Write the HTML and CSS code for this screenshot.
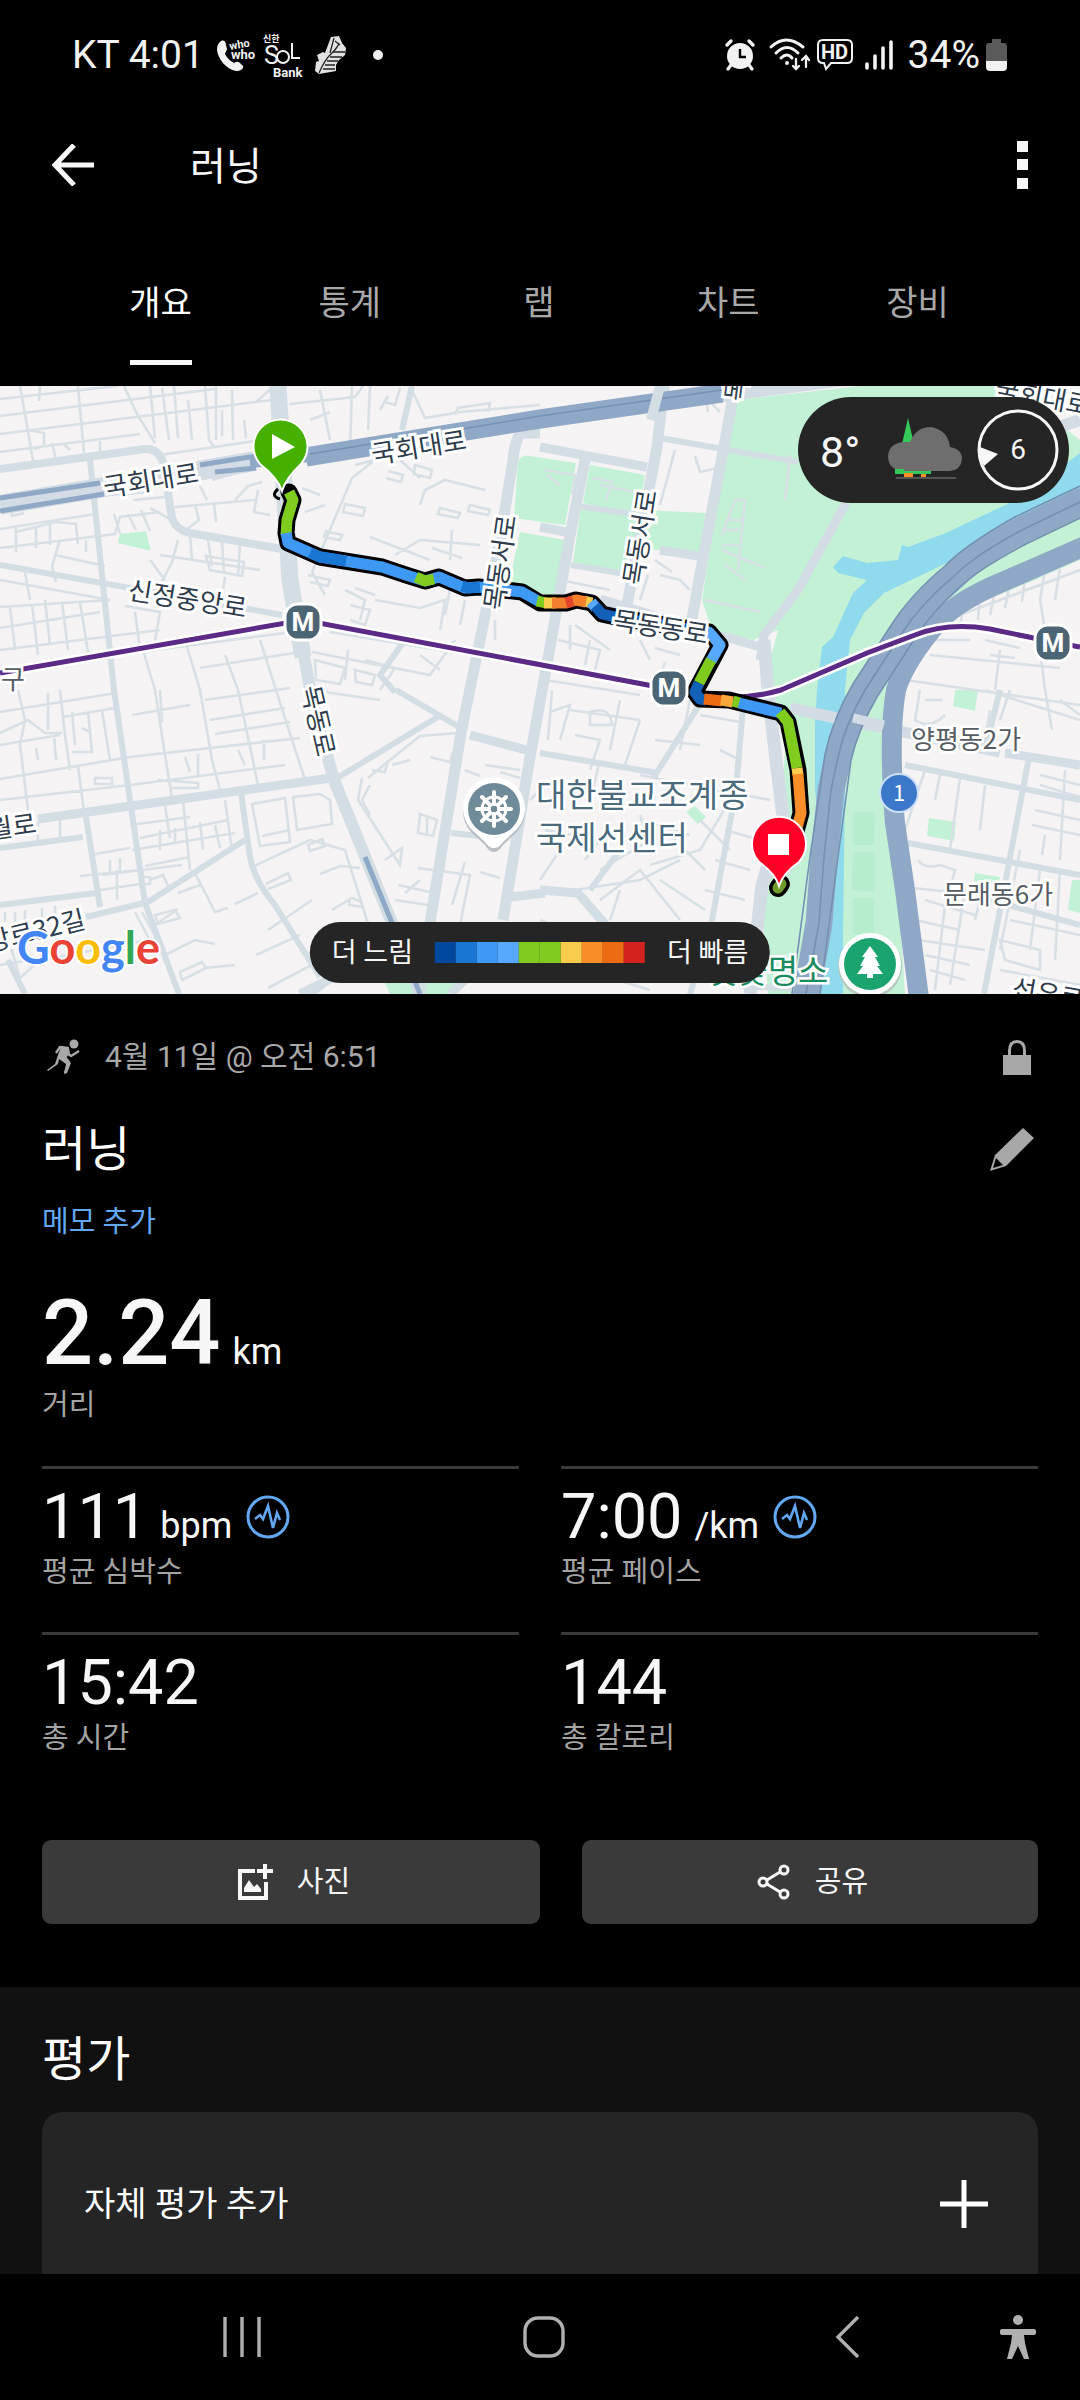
FILE: index.html
```html
<!DOCTYPE html>
<html lang="ko">
<head>
<meta charset="utf-8">
<meta name="viewport" content="width=device-width, initial-scale=1">
<title>러닝</title>
<link rel="stylesheet" href="styles.css">
</head>
<body>
<div class="status">
  <div class="status-side">
    <span class="status-text">KT 4:01</span>
    <svg class="ic-who" width="40" height="36" viewBox="0 0 40 36"><path d="M3 5C6 2 9 4 9 8L10 12C10 14 8 15 8 17C10 21 13 24 17 26C19 25 21 24 23 26L26 29C27 32 23 34 19 34C9 32 1 22 0 13C0 9 1 7 3 5Z" fill="#f2f2f2"/><text x="13" y="13" font-size="11" font-weight="700" transform="rotate(-10 13 13)">who</text><text x="14" y="22" font-size="13" font-weight="700">who</text></svg>
    <svg class="ic-sol" width="42" height="48" viewBox="0 0 42 48"><text x="0" y="11" font-size="9" font-weight="700">신한</text><text x="1" y="33" font-size="25">S</text><circle cx="20" cy="26" r="6" fill="none" stroke="#f2f2f2" stroke-width="2"/><path d="M29 12V27H37" fill="none" stroke="#f2f2f2" stroke-width="2"/><text x="10" y="46" font-size="13" font-weight="700">Bank</text></svg>
    <svg class="ic-shoe" width="32" height="40" viewBox="0 0 32 40"><path d="M16 2L24 1L27 8L31 13L30 20L24 25L21 30V36L4 39L0 36L1 27L4 26L2 20L8 17L10 18L13 10Z" fill="#e2e2e2"/><path d="M4 38Q10 24 17 18Q23 12 24 8M15 18L19 3M18 17L30 17M15 22L27 22M12 26L23 26M10 30L20 30M8 34L20 34M20 6L25 10" fill="none" stroke="#222" stroke-width="1.3"/></svg>
    <svg class="ic-dot" width="10" height="10" viewBox="0 0 10 10"><circle cx="5" cy="5" r="5" fill="#f2f2f2"/></svg>
  </div>
  <div class="status-side">
    <svg class="ic-alarm" width="30" height="32" viewBox="0 0 30 32"><circle cx="15" cy="17" r="13" fill="#f2f2f2"/><path d="M2 6L6 2M28 6L24 2M6 26L3 30M24 26L27 30" stroke="#f2f2f2" stroke-width="3.4" stroke-linecap="round"/><path d="M15 10V18H21" fill="none" stroke="#000" stroke-width="2.4"/></svg>
    <svg class="ic-wifi" width="42" height="34" viewBox="0 0 42 34" fill="none" stroke="#f2f2f2" stroke-linecap="round"><path d="M2 9Q17 -5 34 9M7 15Q18 4 29 15M12 20Q18 14 23 20" stroke-width="3"/><path d="M27 21V31M24 28L27 31L30 28M37 29V19M33 22L37 18L40 22" stroke-width="2.3"/><circle cx="18" cy="25" r="2" fill="#f2f2f2" stroke="none"/></svg>
    <svg class="ic-hd" width="36" height="34" viewBox="0 0 36 34"><path d="M6 2H30Q35 2 35 7V20Q35 25 30 25H14L9 31L7 25H6Q1 25 1 20V7Q1 2 6 2Z" fill="none" stroke="#f2f2f2" stroke-width="2"/><text x="4" y="21" font-size="20" font-weight="700">HD</text></svg>
    <svg class="ic-signal" width="28" height="32" viewBox="0 0 28 32"><path d="M2 25V29M10 17V29M18 9V29M26 3V29" stroke="#f2f2f2" stroke-width="3.6" stroke-linecap="round"/></svg>
    <span class="status-text">34%</span>
    <svg class="ic-batt" width="21" height="32" viewBox="0 0 21 32"><path d="M6 0H15V4H18Q21 4 21 8V22H0V8Q0 4 3 4H6Z" fill="#5a5a5a"/><path d="M0 22H21V28Q21 32 17 32H4Q0 32 0 28Z" fill="#f2f2f2"/></svg>
  </div>
</div>

<header class="appbar">
  <button class="icon-btn" aria-label="뒤로"><svg width="42" height="42" viewBox="0 0 42 42"><path d="M22 1L3 21L22 41M3 21H42" fill="none" stroke="#f7f7f7" stroke-width="5"/></svg></button>
  <h1 class="appbar-title">러닝</h1>
  <button class="icon-btn" aria-label="메뉴"><svg width="11" height="48" viewBox="0 0 11 48"><path d="M0 0H11V11H0ZM0 18H11V29H0ZM0 37H11V48H0Z" fill="#f7f7f7"/></svg></button>
</header>

<nav class="tabs">
  <a class="tab tab-on" href="#overview">개요</a>
  <a class="tab" href="#stats">통계</a>
  <a class="tab" href="#laps">랩</a>
  <a class="tab" href="#charts">차트</a>
  <a class="tab" href="#gear">장비</a>
</nav>

<div class="map" id="overview">
<svg class="map-svg" viewBox="0 386 1080 608" role="img" aria-label="경로 지도">
  <rect x="0" y="386" width="1080" height="608" fill="#f5f3f4"/>
  <!-- parks -->
  <g fill="#c3f1d5">
    <path d="M736 400L860 386H1010L1080 440V560L1035 580L950 615L915 660L890 700L884 740L896 850L905 994H768L762 900L778 850L785 750L774 690L771 657L778 630L753 640L712 630L702 600L726 447Z"/>
    <path d="M518 462Q522 454 530 456L576 463L565 525L514 518Z"/>
    <path d="M520 532L565 540L556 596L508 588Z"/>
    <path d="M590 465L645 475L638 515L583 503Z"/>
    <path d="M581 507L707 513L702 553L630 548L622 573L573 562Z"/>
    <path d="M120 534L146 531L151 551L118 543Z"/>
    <path d="M929 818L956 822L954 841L927 836ZM955 690H978L975 711L953 706ZM975 873L1000 877L998 883L974 881ZM1072 880H1080V913L1068 910ZM686 812L695 806L706 817L698 824ZM385 983H462L448 994H390Z"/>
  </g>
  <g fill="#b6edcd"><path d="M853 812H875L874 845H853ZM853 852H875V892L852 890ZM853 898H874V934H853Z"/></g>
  <!-- river -->
  <path d="M1080 453L1022 497L946 533L908 547L902 545L898 560L867 563L843 556L833 567L838 573L867 580L853 593L833 637L822 647L817 690L815 723V790L824 870L815 994H843V930L846 723L845 690L850 640L864 613L884 593L953 560L1080 495Z" fill="#90daee"/>
  <!-- alleys -->
  <g fill="none" stroke="#d8e0e6" stroke-width="2.6">
    <path d="M0 399L118 386M0 416L215 389M0 434L272 400M0 452L140 434M160 455L262 440M20 386L34 466M40 386L39 401M78 386L84 453M52 443L56 459M124 386L137 414L155 443M150 386L155 438M162 388L169 440M174 386L178 438M188 400L192 440M205 386L209 440L215 448M216 386V440M222 436V410M232 390L233 440M244 420L246 438M256 402L272 388M64 444L70 450M100 441V451M28 430L44 433V446L34 449"/>
    <path d="M0 529L95 514M0 548L66 540L115 534L120 517L160 512M16 528L16 552M16 532L56 522L76 524L78 544M36 526L36 548M50 522V545M0 503L150 492M10 504L12 516L24 513M114 514L120 534M128 514L136 530M141 510L150 531M133 500L165 497M150 508L172 520M60 540L52 566L56 582M86 552V540M100 550L102 590M0 580L110 600M55 555L105 566M25 572L30 600"/>
    <path d="M175 507L255 500M195 505L199 520L186 530M214 503L216 522M235 500L248 486L262 482M178 540L172 562L160 585L150 600M160 555L260 570M150 560L165 580M190 534L192 560M208 540L212 566M222 542L224 572M240 545L238 575M206 556L244 562L242 576L210 570ZM174 585L190 610M188 590L240 602M225 577L220 610M200 486L207 500M258 490L254 512L270 515M212 480L248 470"/>
    <path d="M0 607L110 600M0 628L100 612M0 650L160 630M10 607L15 650M32 604L38 655M45 600L50 645M62 602L68 650M80 602L88 652M0 670L140 652L285 633M125 606L160 612L155 640M135 612L140 650M185 640L200 690L212 760L220 790M143 650L155 690L165 755L172 798M225 655L238 690L258 785M260 640L276 690L305 780M200 668L300 652M205 700L290 688M210 720L285 708M215 734L290 722"/>
    <path d="M0 712L116 693M0 745L60 735M62 717L115 708M0 779L130 757L300 738M0 800L130 785L285 765M60 690L65 735L70 770M18 690L25 720L20 745L28 810M0 733L28 720L45 733H62M48 693V730M72 712L75 745M88 712L92 752M102 710L110 760M82 728L90 732L92 752H72M36 748L38 760M54 735L56 760M78 766L84 812M95 778H112V784H95ZM158 780L198 783V788H170M185 757L190 772M198 754V775M238 750L245 765M264 740V760M160 690L162 722M132 715L190 705"/>
    <path d="M38 822V840M60 820V838M130 825L190 817M140 838L228 820M132 850L235 833M145 866L190 857M165 805L170 838M183 800L190 870M200 822L203 850M215 825L220 848M160 830V850M175 828V844M225 800L232 850M95 854L130 848M102 875L182 865M110 860V875M120 858V872M142 877H150V884H142ZM80 876L140 870M100 890L140 884M117 870V900M150 880L163 875L170 890M5 912V922M15 912V922M25 910V920M42 908V918M55 906V914"/>
    <path d="M0 965L30 960M10 945L20 978L40 960L160 938M155 925L178 909M155 915L175 910L180 918L158 924ZM165 955L195 940L215 944M180 972L202 962L206 968L182 980ZM205 968L235 965M178 893L200 885M196 875L215 912L228 908M135 912L155 950M142 912L160 945"/>
    <path d="M252 804L285 798L290 842L260 846ZM293 797L320 794L330 800L332 824L297 830ZM262 836L290 830M250 868L310 840L345 850L385 978M308 845L322 839L325 846L310 851ZM266 884L288 873L291 880L268 889M320 874L340 866L360 868M235 904L258 893M268 930L312 900M256 955L300 935M268 988L340 950M332 910L352 898L362 902M350 898L349 905L364 907"/>
    <path d="M368 778L385 764L420 736L458 733M362 778L358 800L400 865L402 848L385 860M388 760L385 772L372 770M392 765L410 760M430 757L450 762L453 752M370 785L362 800L370 815M420 814L437 820L433 836L418 833ZM427 815V835M398 885L430 892M405 893L420 880M395 900L428 905M418 868L470 875L460 925M452 905L465 862M480 872L500 878M465 770L480 776M500 772L520 778M485 765L520 770M530 800L540 790"/>
    <path d="M290 404L355 397L363 386M320 390L330 440M352 386L350 450M310 420L330 412M370 386L368 430M388 396L380 410M400 388L395 405L385 402M410 386L425 418L460 412L540 405M455 415L458 408L490 403L488 412M355 465L375 460L352 478L312 572M400 460L420 478M415 465L432 470L430 478L414 474ZM388 471L403 475L401 482L386 478M425 490L445 480L485 490M425 490L420 505M345 504L365 508L363 516L343 512ZM326 531L342 535L340 540L324 537ZM440 508L460 513L458 518L438 514ZM470 505L490 510L488 515L468 511ZM302 488L320 495M305 512L325 505M370 537L430 560M395 555L420 540L480 545M450 560L452 530M432 548L462 558M312 572L325 595M308 575L330 580L328 586L310 582M355 588L375 595M345 590L365 600L360 620M350 605L370 610L365 625L350 620M375 600L420 608L445 600L440 630M450 590L445 615M465 600L460 625M488 605L500 610M495 620V640"/>
    <path d="M312 652L430 675L455 640M315 660L345 668L340 684L316 680ZM348 650L345 680M355 670L375 675L372 685L356 682ZM310 690L380 700M365 660L395 668L380 690M420 655L440 670M330 632L470 655L540 668"/>
    <path d="M545 470L575 475L572 495M547 475L560 485M592 478L612 482L606 500M600 485L635 492M675 450L660 505M705 390L708 412M708 400L720 412M695 456L700 472L718 468M722 535L735 500L745 500L738 570M727 520H742M725 530H740M722 545H738M790 455L785 500M722 550L765 568M705 600L760 612M725 565L745 580"/>
    <path d="M560 580L610 590M655 560L672 572M660 575L680 580L690 590M648 575L640 600M575 625L610 650M558 640L600 650L595 670M545 680L640 695M552 690L548 740M570 625V650M590 640L585 665M640 640L650 660M655 648L680 655M665 662L660 680M550 712L570 705L560 740M570 710L640 720M590 712Q610 705 612 725H590ZM575 735L600 740L590 770M620 700L610 750M640 720L625 765M655 740L700 745M690 700L680 750M700 715L740 722M640 775L725 792M600 760L590 800M720 750L740 760"/>
    <path d="M545 830L600 840L585 860M560 850L540 880M600 870L650 840L640 815M575 890L640 880L680 860M600 900L640 870L680 920M620 890L610 920M640 820L690 835M650 865L700 850L730 800M660 880L705 910M670 835L705 870M700 820L730 850M720 790L770 800M725 830L760 840M715 860L750 870M705 890L745 900M540 920L640 960M550 960L650 990"/>
    <path d="M960 615L1080 570M930 655L1060 668M965 600L960 625M980 595L978 620M995 590L990 615M1010 583L1005 608M1025 578L1022 602M1045 570L1040 600L1050 660M1060 568L1055 600M985 640L1020 648M990 655L1015 658M935 640L970 640M1000 650L995 690M905 680L1080 705M920 690L915 720Q930 730 945 715M925 700H942M1040 650L1045 690L1052 730M985 690L1080 720M1060 700L1080 715M990 710L985 740"/>
    <path d="M912 730L1000 752M1010 690L1000 720M925 770L905 830M940 775L935 800M960 778L950 850M985 785L980 830M1040 775L1080 785M1040 785L1080 797M1035 810L1080 820M1032 825L1080 835M1045 835L1042 855M1065 770L1060 860M918 860Q925 870 940 865L955 870L950 890M912 888L985 895M925 900L975 915M915 920L960 930M918 940L985 950M925 955L970 965M930 970L965 980M945 905L935 990M965 890L950 985M985 880L975 920M1020 850L1000 950M1040 870L1030 950M1060 870L1055 960M1010 920L1080 935M1000 940L1040 950V970L1005 960ZM1000 970L1080 985"/>
  </g>
  <!-- streets -->
  <g fill="none" stroke="#d3dde4" stroke-linejoin="round">
    <path stroke-width="8" d="M0 469L145 449Q158 448 163 462L172 518Q176 530 190 533L282 549"/>
    <path stroke-width="6" d="M90 460L114 690L145 903L179 994M0 565L282 615M241 793L250 857Q254 880 275 905L320 977M0 905L96 893M245 840L148 902L86 917M86 817L100 907M0 848L83 837M337 778L441 715M396 690L461 728M405 640L380 675L395 692M540 753L657 773M654 777L698 707M743 707L736 790L712 920L690 994M590 890L620 850M905 765L1080 800M908 843L1080 875M955 890L1080 925M1029 757L984 994M1000 690L985 750M820 990L740 986M412 386L402 430M8 960L25 994M330 980L312 994M451 833L500 838M660 438L798 462M571 505L640 515M571 565L625 574"/>
    <path stroke-width="9" d="M38 819L331 778M540 447L647 467M660 550L705 557M540 527L571 533M726 637L760 647M540 890L578 893L610 930M1005 753L1080 765M510 897L545 893M450 994L470 975M340 974L300 994M470 735L530 751"/>
    <path stroke-width="11" d="M664 386L657 447L626 610M735 386L722 457L705 547L690 630M585 460L571 530L550 647L530 757L503 920M540 433L520 433Q514 445 513 460L499 547L461 733L430 923L420 994"/>
    <path stroke-width="17" d="M278 386L290 580L303 657"/>
    <path stroke-width="12" d="M303 650L312 700L334 780L392 923L420 994"/>
  </g>
  <g fill="none" stroke="#d3dbe5">
    <path stroke-width="9" d="M846 503L798 590L764 635L760 660"/>
    <path stroke-width="13" d="M764 640L768 690L776 760L783 817L762 885L750 994"/>
    <path stroke-width="11" d="M600 600L730 640M790 708L884 728M884 728L1000 752"/>
    <path stroke-width="12" d="M722 396L860 378M1080 420L1050 430"/>
    <path stroke-width="20" d="M0 505L255 461"/>
  </g>
  <!-- expressways -->
  <g fill="none" stroke="#8fa8c5">
    <path stroke-width="19" d="M306 457L540 419L722 393"/>
    <path stroke-width="5" d="M0 498L100 483M0 511L104 494M200 465L256 456M215 472L256 468M365 857L392 923L420 994"/>
    <path stroke-width="12" d="M250 462L310 456"/>
    <path stroke-width="27" d="M1085 500L1022 530Q975 555 953 577Q920 605 902 633L865 690Q845 725 838 757L831 790L824 857L819 923L806 998"/>
    <path stroke-width="20" d="M1085 546L1000 583Q960 600 940 620Q905 660 896 690Q888 735 895 823L905 890L919 998"/>
  </g>
  <g fill="none" stroke="#7490b3" stroke-width="1.6">
    <path d="M310 454L540 416L722 390M1080 502L1022 530Q975 555 953 577Q920 605 902 633L865 690Q845 725 838 757L831 790L824 857L819 923L806 994"/>
    <path d="M1080 486L1015 517Q965 545 945 566Q910 595 890 627L853 684Q832 720 825 755L810 857L792 994M1080 518L1028 543Q980 568 961 586Q930 614 914 640L877 697Q858 730 851 760L838 857L820 994"/>
  </g>
  <path d="M660 386L651 420" stroke="#d3dde4" stroke-width="10"/>
  <path d="M853 718L884 725M805 712L835 719" stroke="#d3dbe5" stroke-width="9"/>
  <!-- metro line -->
  <g fill="none">
    <path d="M0 673L303 620L669 689Q730 705 781 690L867 653L915 635Q948 622 990 629L1053 642L1080 647" stroke="#fff" stroke-width="10"/>
    <path d="M0 673L303 620L669 689Q730 705 781 690L867 653L915 635Q948 622 990 629L1053 642L1080 647" stroke="#5b2a86" stroke-width="5"/>
  </g>
  <!-- recorded track -->
  <g fill="none" stroke-linejoin="round">
    <path d="M278 489Q270 496 280 499" stroke="#000" stroke-width="3"/>
    <path d="M289 492L293 500L287 520L286 533L288 543L320 557L382 567L406 575L425 581L439 577L465 588L479 587L522 592L540 603L566 603L576 600L592 603L602 614L620 618L709 632L720 645L695 692L700 699L729 700L781 713L788 722L798 770L801 813L795 835" stroke="#000" stroke-width="17" stroke-linecap="round"/>
    <path d="M781 884L778 888" stroke="#000" stroke-width="18" stroke-linecap="round"/>
    <g stroke-width="11">
      <path d="M781 884L778 888" stroke="#6f9c2b" stroke-linecap="round"/>
      <path d="M289 492L293 500L287 520L286 535" stroke="#7fcc1f"/>
      <path d="M286 533L288 543L320 557L382 567L406 575L425 581L439 577L465 588L479 587L522 592L540 602" stroke="#3e99f5"/>
      <path d="M310 553L320 557L346 561M462 586L469 588L480 587" stroke="#1976d2"/>
      <path d="M416 577L425 581L434 579M537 601L546 603" stroke="#7fcc1f"/>
      <path d="M544 603H556M584 601L592 603" stroke="#f9cd4b"/>
      <path d="M552 603H566L576 600L586 602" stroke="#f4802b"/>
      <path d="M566 603L573 601" stroke="#e2462a"/>
      <path d="M591 602L596 608" stroke="#57a9ff"/>
      <path d="M595 606L602 614L620 618L705 632" stroke="#1260b8"/>
      <path d="M705 631L709 632L720 645L711 661" stroke="#57a9ff"/>
      <path d="M711 660L699 683" stroke="#7fcc1f"/>
      <path d="M699 683L695 692L700 699L706 700" stroke="#1260b8"/>
      <path d="M704 699L722 701" stroke="#ec6a11"/>
      <path d="M721 700L733 702" stroke="#f9a63a"/>
      <path d="M733 701L740 703" stroke="#7fcc1f"/>
      <path d="M739 703L781 713" stroke="#3e99f5"/>
      <path d="M780 712L788 722L797 768" stroke="#7fcc1f"/>
      <path d="M797 768L798 775" stroke="#f9cd4b"/>
      <path d="M798 774L801 813L795 835" stroke="#f98d28"/>
    </g>
  </g>
  <!-- place names -->
  <g class="road-name">
    <text transform="translate(105 497) rotate(-9)">국회대로</text>
    <text transform="translate(373 464) rotate(-9)">국회대로</text>
    <text transform="translate(994 397) rotate(11)">국회대로</text>
    <text transform="translate(127 599) rotate(9)">신정중앙로</text>
    <text transform="translate(503 611) rotate(-82)">목동서로</text>
    <text transform="translate(642 586) rotate(-81)">목동서로</text>
    <text transform="translate(744 402) rotate(-83)">목동동로</text>
    <text transform="translate(612 629) rotate(9)">목동동로</text>
    <text transform="translate(301 688) rotate(77)">목동로</text>
    <text transform="translate(-10 839) rotate(-8)">월로</text>
    <text transform="translate(-11 952) rotate(-14)">앙로32길</text>
    <text transform="translate(1011 997) rotate(10)">선유로</text>
  </g>
  <g class="area-name">
    <text x="1" y="689">구</text>
    <text x="911" y="749">양평동2가</text>
    <text x="943" y="904">문래동6가</text>
  </g>
  <g class="poi-name">
    <text x="536" y="807">대한불교조계종</text>
    <text x="536" y="850">국제선센터</text>
    <text class="poi-green" x="707" y="983">벚꽃명소</text>
  </g>
  <!-- stations -->
  <g class="station">
    <rect x="285" y="604" width="36" height="36" rx="13"/><text x="303" y="631">M</text>
    <rect x="651" y="670" width="36" height="36" rx="13"/><text x="669" y="697">M</text>
    <rect x="1035" y="625" width="36" height="36" rx="13"/><text x="1053" y="652">M</text>
  </g>
  <circle cx="899" cy="793" r="19" fill="#3b78c9" stroke="#cde0fa" stroke-width="2"/>
  <text class="route-no" x="899" y="801">1</text>
  <g>
    <path d="M494 850Q489 850 485 843L471 830A31 31 0 1 1 517 830L503 843Q499 850 494 850Z" fill="#b9bfc4" transform="translate(0 2)"/>
    <path d="M494 848Q489 848 485 842L471 829A31 31 0 1 1 517 829L503 842Q499 848 494 848Z" fill="#fff"/>
    <circle cx="494" cy="809" r="26" fill="#6f8a99"/>
    <g stroke="#fff" fill="none"><circle cx="494" cy="809" r="12" stroke-width="3"/><circle cx="494" cy="809" r="5" stroke-width="3"/><path d="M494 792V804M494 814V826M477 809H489M499 809H511M482 797L490 805M498 813L506 821M506 797L498 805M490 813L482 821" stroke-width="4" stroke-linecap="round"/></g>
  </g>
  <g>
    <circle cx="870" cy="966" r="32" fill="#b9c9c0"/>
    <path d="M858 990H882L876 1000H864Z" fill="#fff"/>
    <circle cx="870" cy="964" r="31" fill="#fff"/>
    <circle cx="870" cy="964" r="26" fill="#1ba470"/>
    <path d="M870 946L878 957H875L880 966H877L883 974H873V978H867V974H857L863 966H860L865 957H862Z" fill="#fff"/>
  </g>
  <!-- start and finish -->
  <path d="M282 491Q278 478 260 464A27 27 0 1 1 301 464Q286 478 282 491Z" fill="#45b000" stroke="#fff" stroke-width="2"/>
  <path d="M272 434V459L295 447Z" fill="#fff"/>
  <path d="M779 886Q775 873 759 862A27 27 0 1 1 799 862Q783 873 779 886Z" fill="#ff0026" stroke="#fff" stroke-width="2"/>
  <rect x="768" y="834" width="21" height="21" fill="#fff"/>
  <text class="brand" x="17" y="964"><tspan fill="#4285f4">G</tspan><tspan fill="#ea4335">o</tspan><tspan fill="#fbbc05">o</tspan><tspan fill="#4285f4">g</tspan><tspan fill="#34a853">l</tspan><tspan fill="#ea4335">e</tspan></text>
</svg>
  <div class="weather">
    <span class="temp">8°</span>
    <svg width="74" height="64" viewBox="0 0 74 64"><path d="M20 0L26 26H14Z" fill="#35c95a"/><path d="M16 53Q0 52 0 38Q1 25 16 24H22Q28 9 43 9Q60 12 62 29Q74 31 74 41Q73 52 62 53Z" fill="#6e6e6e"/><path d="M7 51H16V53H43V56H7Z" fill="#35c95a"/><path d="M16 55H25V59H16ZM33 56H38V59H33Z" fill="#f98d28"/><path d="M8 60H68" stroke="#555" stroke-width="2"/></svg>
    <span class="wind"><svg class="wind-ring" width="82" height="82" viewBox="0 0 82 82"><circle cx="41" cy="41" r="39" fill="none" stroke="#f7f7f7" stroke-width="3"/><path d="M3 38L21 45L7 57Q2 48 3 38Z" fill="#f7f7f7"/></svg><span>6</span></span>
  </div>
  <div class="legend">
    <span>더 느림</span>
    <span class="scale"><i class="c1"></i><i class="c2"></i><i class="c3"></i><i class="c4"></i><i class="c5"></i><i class="c5"></i><i class="c6"></i><i class="c7"></i><i class="c8"></i><i class="c9"></i></span>
    <span>더 빠름</span>
  </div>
</div>

<main class="detail">
  <div class="row date-row">
    <svg width="34" height="36" viewBox="0 0 34 36"><circle cx="27" cy="5" r="4.500" fill="#a8a8a8"/><path d="M9 14L13 8L21 9L17 17L22 23L18 34M18 12L24 17L32 12" fill="none" stroke="#a8a8a8" stroke-width="2.400" stroke-linejoin="round"/><path d="M14 8L22 9L23 14L19 19L24 24L20 34L17 35L19 25L12 20L11 25L1 32L0 31L8 25L11 16Z" fill="#a8a8a8"/></svg>
    <span class="date">4월 11일 @ 오전 6:51</span>
    <svg class="lock" width="28" height="35" viewBox="0 0 28 35"><path d="M0 15H5V11Q5 0 14 0Q23 0 23 11V15H28V35H0ZM8 15H20V11Q20 3 14 3Q8 3 8 11Z" fill="#a8a8a8" fill-rule="evenodd"/></svg>
  </div>
  <div class="row title-row">
    <h2 class="heading">러닝</h2>
    <button class="icon-btn" aria-label="편집"><svg width="44" height="44" viewBox="0 0 44 44"><path d="M33 0L44 10L16 38L0 43L5 27ZM6 30L3 40L13 37Z" fill="#a8a8a8" fill-rule="evenodd"/></svg></button>
  </div>
  <a class="memo" href="#memo">메모 추가</a>
  <div class="distance">
    <div class="value value-xl">2.24<span class="unit">km</span></div>
    <div class="label">거리</div>
  </div>
  <div class="metrics">
    <div class="metric"><div class="value">111<span class="unit">bpm</span><svg class="pulse" width="46" height="46" viewBox="0 0 46 46"><circle cx="23" cy="23" r="20" fill="none" stroke="#61a7f1" stroke-width="3"/><path d="M10 25L15 21L18 25L23 12L28 34L32 19L35 26" fill="none" stroke="#61a7f1" stroke-width="2.600"/></svg></div><div class="label">평균 심박수</div></div>
    <div class="metric"><div class="value">7:00<span class="unit">/km</span><svg class="pulse" width="46" height="46" viewBox="0 0 46 46"><circle cx="23" cy="23" r="20" fill="none" stroke="#61a7f1" stroke-width="3"/><path d="M10 25L15 21L18 25L23 12L28 34L32 19L35 26" fill="none" stroke="#61a7f1" stroke-width="2.600"/></svg></div><div class="label">평균 페이스</div></div>
    <div class="metric"><div class="value">15:42</div><div class="label">총 시간</div></div>
    <div class="metric"><div class="value">144</div><div class="label">총 칼로리</div></div>
  </div>
  <div class="actions">
    <button class="action"><svg width="36" height="36" viewBox="0 0 36 36"><path d="M18 7H3V34H29V18" fill="none" stroke="#f7f7f7" stroke-width="4"/><path d="M28 0V15M20 7H36" stroke="#f7f7f7" stroke-width="4"/><path d="M7 28V24L12 16L17 23L20 20L24 25V28Z" fill="#f7f7f7"/></svg>사진</button>
    <button class="action"><svg width="34" height="36" viewBox="0 0 34 36" fill="none" stroke="#f7f7f7" stroke-width="3"><circle cx="6" cy="18" r="4"/><circle cx="27" cy="6" r="4"/><circle cx="27" cy="30" r="4"/><path d="M10 16L23 8M10 20L23 28"/></svg>공유</button>
  </div>
</main>

<section class="rating">
  <h2 class="heading">평가</h2>
  <button class="card"><span>자체 평가 추가</span><svg width="48" height="48" viewBox="0 0 48 48"><path d="M24 0V48M0 24H48" stroke="#fff" stroke-width="5"/></svg></button>
</section>

<nav class="sysbar">
  <button class="icon-btn" aria-label="최근 앱"><svg width="38" height="42" viewBox="0 0 38 42"><path d="M2 1V41M19 1V41M36 1V41" stroke="#b0b0b0" stroke-width="3.400"/></svg></button>
  <button class="icon-btn" aria-label="홈"><svg width="42" height="42" viewBox="0 0 42 42"><rect x="2" y="2" width="38" height="38" rx="13" fill="none" stroke="#b0b0b0" stroke-width="3.400"/></svg></button>
  <button class="icon-btn" aria-label="이전"><svg width="24" height="42" viewBox="0 0 24 42"><path d="M23 1L3 21L23 41" fill="none" stroke="#b0b0b0" stroke-width="3.400"/></svg></button>
  <button class="icon-btn" aria-label="접근성"><svg width="36" height="44" viewBox="0 0 36 44"><circle cx="18" cy="5" r="5" fill="#b0b0b0"/><path d="M2 14H34Q36 14 36 16V18Q36 20 34 20H24L25 28L29 44H24L18 31L12 44H7L11 28L12 20H2Q0 20 0 18V16Q0 14 2 14Z" fill="#b0b0b0"/></svg></button>
</nav>
</body>
</html>
```

FILE: styles.css
```css
* { box-sizing: border-box; }
body {
  margin: 0;
  min-height: 100vh;
  display: flex;
  flex-direction: column;
  background: #000;
  color: #f7f7f7;
  font-family: Roboto, "Noto Sans CJK KR", sans-serif;
  font-size: 29px;
  line-height: 40px;
}
h1, h2 { margin: 0; font-weight: 400; }
a { text-decoration: none; }
svg { display: block; flex: none; }
svg text { fill: #f2f2f2; }
button { font: inherit; color: inherit; border: 0; background: none; padding: 0; }
.icon-btn { display: block; }

/* status bar */
.status { height: 110px; padding: 0 73px 0 72px; display: flex; justify-content: space-between; align-items: center; }
.status-side { display: flex; align-items: center; }
.status-side svg { overflow: visible; }
.status-text { font-size: 39px; color: #f2f2f2; }
.ic-who { margin-left: 13px; }
.ic-sol { margin-left: 6px; }
.ic-shoe { margin-left: 10px; }
.ic-dot { margin-left: 26px; }
.ic-wifi { margin-left: 14px; }
.ic-hd { margin-left: 6px; }
.ic-signal { margin: 0 15px 0 12px; }
.ic-batt { margin-left: 6px; }

/* app bar */
.appbar { height: 110px; padding: 0 52px; display: flex; align-items: center; }
.appbar-title { flex: 1; margin-left: 96px; padding-top: 3px; font-size: 39px; }
.tabs { height: 166px; padding: 0 68px 0 66px; display: flex; }
.tab { position: relative; flex: 1; display: flex; align-items: center; justify-content: center; font-size: 34px; color: #a8a8a8; }
.tab-on { color: #fff; }
.tab-on::after { content: ""; position: absolute; bottom: 21px; width: 62px; height: 5px; background: #f7f7f7; }

/* map */
.map { position: relative; }
.map-svg { width: 100%; height: auto; font-family: "Noto Sans CJK KR", sans-serif; }
.road-name text { font-size: 26px; fill: #2f3d4d; stroke: #fff; stroke-width: 6px; paint-order: stroke; }
.area-name text { font-size: 26px; fill: #555d63; stroke: #fff; stroke-width: 5px; paint-order: stroke; }
.poi-name text { font-size: 33px; fill: #4b6b7d; stroke: #fff; stroke-width: 5px; paint-order: stroke; }
.poi-name .poi-green { fill: #1a8a5f; }
.station rect { fill: #4c6575; stroke: #fff; stroke-width: 3px; }
.station text { font: 700 26px Roboto, sans-serif; fill: #fff; text-anchor: middle; }
.route-no { font-size: 22px; fill: #fff; text-anchor: middle; }
.map-svg .brand { font: 700 45px Lato, sans-serif; stroke: #fff; stroke-width: 4px; paint-order: stroke; }
.weather { position: absolute; top: 11px; right: 11px; width: 271px; height: 106px; padding: 0 10px 0 22px; border-radius: 53px; background: #252525; display: flex; align-items: center; gap: 26px; }
.temp { flex: 1; padding-top: 4px; font-size: 43px; }
.wind { position: relative; margin-left: -11px; width: 82px; height: 82px; display: flex; align-items: center; justify-content: center; font-size: 28px; }
.wind-ring { position: absolute; inset: 0; }
.legend { position: absolute; bottom: 11px; left: 50%; transform: translateX(-50%); height: 61px; padding: 0 22px; border-radius: 31px; background: #252525; display: flex; align-items: center; gap: 22px; font-size: 27px; white-space: nowrap; }
.scale { display: flex; }
.scale i { width: 21px; height: 21px; }
.c1 { background: #00489e; }
.c2 { background: #1976d2; }
.c3 { background: #3e99f5; }
.c4 { background: #57a9ff; }
.c5 { background: #7fcc1f; }
.c6 { background: #f9cd4b; }
.c7 { background: #f98d28; }
.c8 { background: #ec6a11; }
.c9 { background: #d4221f; }

/* activity details */
.detail { padding: 43px 42px 63px; }
.row { display: flex; align-items: center; justify-content: space-between; }
.date-row { height: 40px; padding: 0 7px 0 5px; color: #a8a8a8; }
.date { flex: 1; margin-left: 24px; font-size: 30px; }
.title-row { height: 60px; margin-top: 43px; padding-right: 4px; }
.heading { font-size: 48px; line-height: 60px; color: #fff; }
.memo { display: block; margin-top: 22px; color: #61a7f1; }
.distance { margin: 42px 0 41px; }
.value { display: flex; align-items: baseline; font-size: 63px; line-height: 68px; }
.value-xl { font-size: 90px; font-weight: 500; line-height: 100px; }
.unit { margin-left: 12px; font-size: 36px; font-weight: 400; line-height: 40px; }
.pulse { align-self: center; margin-left: 13px; }
.label { padding-top: 1px; color: #a3a3a3; }
.metrics { display: grid; grid-template-columns: 1fr 1fr; gap: 40px 42px; }
.metric { border-top: 3px solid #3a3a3a; padding-top: 14px; }
.actions { margin-top: 82px; display: grid; grid-template-columns: 498fr 456fr; gap: 42px; }
.action { height: 84px; padding-left: 5px; border-radius: 9px; background: #3a3a3a; display: flex; align-items: center; justify-content: center; gap: 24px; }

/* rating */
.rating { flex: 1; padding: 43px 42px 0; background: #111; }
.card { width: 100%; margin-top: 22px; padding: 62px 50px 40px 42px; border-radius: 20px 20px 0 0; background: #252525; display: flex; align-items: center; justify-content: space-between; font-size: 34px; line-height: 60px; color: #fff; }

/* system bar */
.sysbar { height: 126px; padding: 0 44px 0 223px; background: #000; display: flex; align-items: center; justify-content: space-between; }
.sysbar .icon-btn:nth-child(2) { margin-left: 121px; }
.sysbar .icon-btn:nth-child(3) { margin-left: 129px; }
```
